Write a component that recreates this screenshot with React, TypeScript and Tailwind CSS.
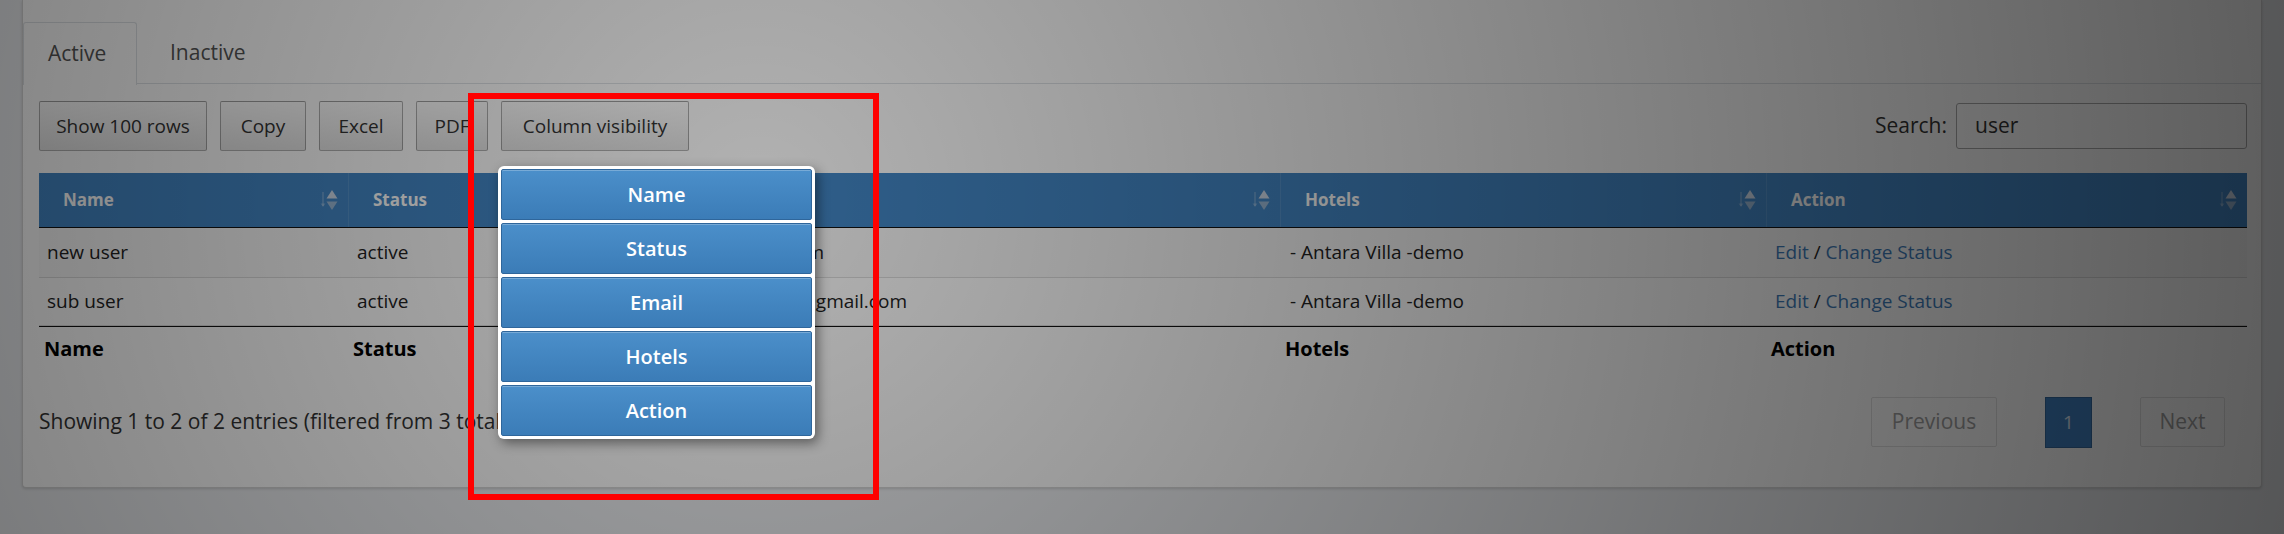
import React from "react";

const SortIcon = () => (
  <svg width="20" height="26" viewBox="0 0 20 26" className="shrink-0">
    <path d="M4 5 L4 19" stroke="#ffffff" strokeOpacity="0.25" strokeWidth="1.5" />
    <path d="M1.5 16.5 L4 20 L6.5 16.5 Z" fill="#ffffff" fillOpacity="0.25" />
    <path d="M13 3 L18.5 11.5 L7.5 11.5 Z" fill="#e6e9ee" fillOpacity="0.85" />
    <path d="M7.5 14.5 L18.5 14.5 L13 23 Z" fill="#d5d9df" fillOpacity="0.6" />
  </svg>
);

const columns = [
  { label: "Name", w: "w-[309px]" },
  { label: "Status", w: "w-[315px]" },
  { label: "Email", w: "w-[617px]" },
  { label: "Hotels", w: "w-[486px]" },
  { label: "Action", w: "w-[481px]" },
];

const rows = [
  { name: "new user", status: "active", email: "new.u@user.com", hotel: "- Antara Villa -demo" },
  { name: "sub user", status: "active", email: "subuser.demo@gmail.com", hotel: "- Antara Villa -demo" },
];

const ToolButton = ({ label, w }: { label: string; w: string }) => (
  <button
    className={`${w} h-[50px] rounded-[2px] border border-black/30 bg-gradient-to-b from-white to-[#e6e6e6] text-[19px] text-[#333]`}
  >
    {label}
  </button>
);

export default function App() {
  return (
    <div
      className="relative w-[2284px] h-[534px] overflow-hidden bg-[#eceef1]"
      style={{ fontFamily: '"Open Sans", "Noto Sans", sans-serif' }}
    >
      {/* page card */}
      <div className="ml-[22px] w-[2240px] h-[488px] bg-white border border-t-0 border-[#d6d6d6] rounded-b-[4px] shadow-[0_1px_3px_rgba(0,0,0,0.15)]">
        <div className="pt-[22px]">
          <div className="flex h-[62px] border-b border-[#dee2e6]">
            <div className="flex items-center w-[114px] h-[63px] pl-[24px] border border-b-0 border-[#dee2e6] rounded-t-[3px] bg-white text-[21px] text-[#555]">
              Active
            </div>
            <div className="flex items-center pl-[33px] text-[21px] text-[#555]">Inactive</div>
          </div>
        </div>

        <div className="pl-[16px] pr-[14px]">
          {/* toolbar */}
          <div className="flex items-center justify-between mt-[17px] h-[50px]">
            <div className="flex gap-[13px]">
              <ToolButton label="Show 100 rows" w="w-[168px]" />
              <ToolButton label="Copy" w="w-[86px]" />
              <ToolButton label="Excel" w="w-[84px]" />
              <ToolButton label="PDF" w="w-[72px]" />
              <ToolButton label="Column visibility" w="w-[188px]" />
            </div>
            <div className="flex items-center gap-[9px]">
              <span className="text-[21px] text-[#333]">Search:</span>
              <div className="w-[291px] h-[46px] border border-[#aaa] rounded-[3px] flex items-center px-[18px] text-[21px] text-[#333]">
                user
              </div>
            </div>
          </div>

          {/* table */}
          <div className="mt-[22px] w-[2208px]">
            <div className="flex h-[55px] bg-[#4387c6] border-b border-[#111]">
              {columns.map((c, i) => (
                <div
                  key={c.label}
                  className={`${c.w} flex items-center justify-between pl-[24px] pr-[9px] ${i > 0 ? "border-l border-white/10" : ""}`}
                >
                  <span className="text-[17px] font-bold text-white">{c.label}</span>
                  <SortIcon />
                </div>
              ))}
            </div>
            {rows.map((r, i) => (
              <div
                key={r.name}
                className={`flex items-center ${i === 0 ? "h-[50px] bg-[#fafafa]" : "h-[48px]"} border-b border-[#ddd] text-[19px] text-[#222]`}
              >
                <div className="w-[309px] pl-[8px]">{r.name}</div>
                <div className="w-[315px] pl-[9px]">{r.status}</div>
                <div className="w-[617px] pl-[8px]">{r.email}</div>
                <div className="w-[486px] pl-[10px]">{r.hotel}</div>
                <div className="w-[481px] pl-[9px]">
                  <span className="text-[#3f7dba]">Edit</span> / <span className="text-[#3f7dba]">Change Status</span>
                </div>
              </div>
            ))}
            <div className="flex items-center h-[44px] border-t border-[#111] text-[20px] font-bold text-black">
              {columns.map((c) => (
                <div key={c.label} className={`${c.w} pl-[5px]`}>
                  {c.label}
                </div>
              ))}
            </div>
          </div>

          {/* info + pagination */}
          <div className="flex items-center justify-between mt-[27px] h-[50px]">
            <span className="text-[21px] text-[#333]">
              Showing 1 to 2 of 2 entries (filtered from 3 total entries)
            </span>
            <div className="flex items-center gap-[48px] mr-[22px]">
              <div className="w-[126px] h-[50px] flex items-center justify-center border border-[#e2e2e2] rounded-[2px] text-[21px] text-[#a0a0a0]">
                Previous
              </div>
              <div className="w-[47px] h-[51px] flex items-center justify-center bg-[#3f7fc0] border border-[#35699e] text-[19px] text-white/80">
                1
              </div>
              <div className="w-[85px] h-[50px] flex items-center justify-center border border-[#e2e2e2] rounded-[2px] text-[21px] text-[#a0a0a0]">
                Next
              </div>
            </div>
          </div>
        </div>
      </div>

      {/* collection background */}
      <div className="absolute inset-0 bg-[radial-gradient(circle_1850px_at_760px_200px,rgba(0,0,0,0.3),rgba(0,0,0,0.7))]" />

      {/* column visibility menu */}
      <div className="absolute left-[498px] top-[166px] w-[317px] p-[3px] bg-white rounded-[6px] shadow-[3px_4px_12px_rgba(0,0,0,0.45)] flex flex-col gap-[3px]">
        {columns.map((c) => (
          <div
            key={c.label}
            className="h-[51px] flex items-center justify-center rounded-[2px] border border-[#2f669b] bg-gradient-to-b from-[#4b8fca] to-[#3b7cb7] shadow-[inset_0_1px_0_rgba(255,255,255,0.25)] text-[20px] font-semibold text-white"
          >
            {c.label}
          </div>
        ))}
      </div>

      {/* annotation */}
      <div className="absolute left-[468px] top-[93px] w-[411px] h-[407px] border-[6px] border-[#ff0000]" />
    </div>
  );
}
